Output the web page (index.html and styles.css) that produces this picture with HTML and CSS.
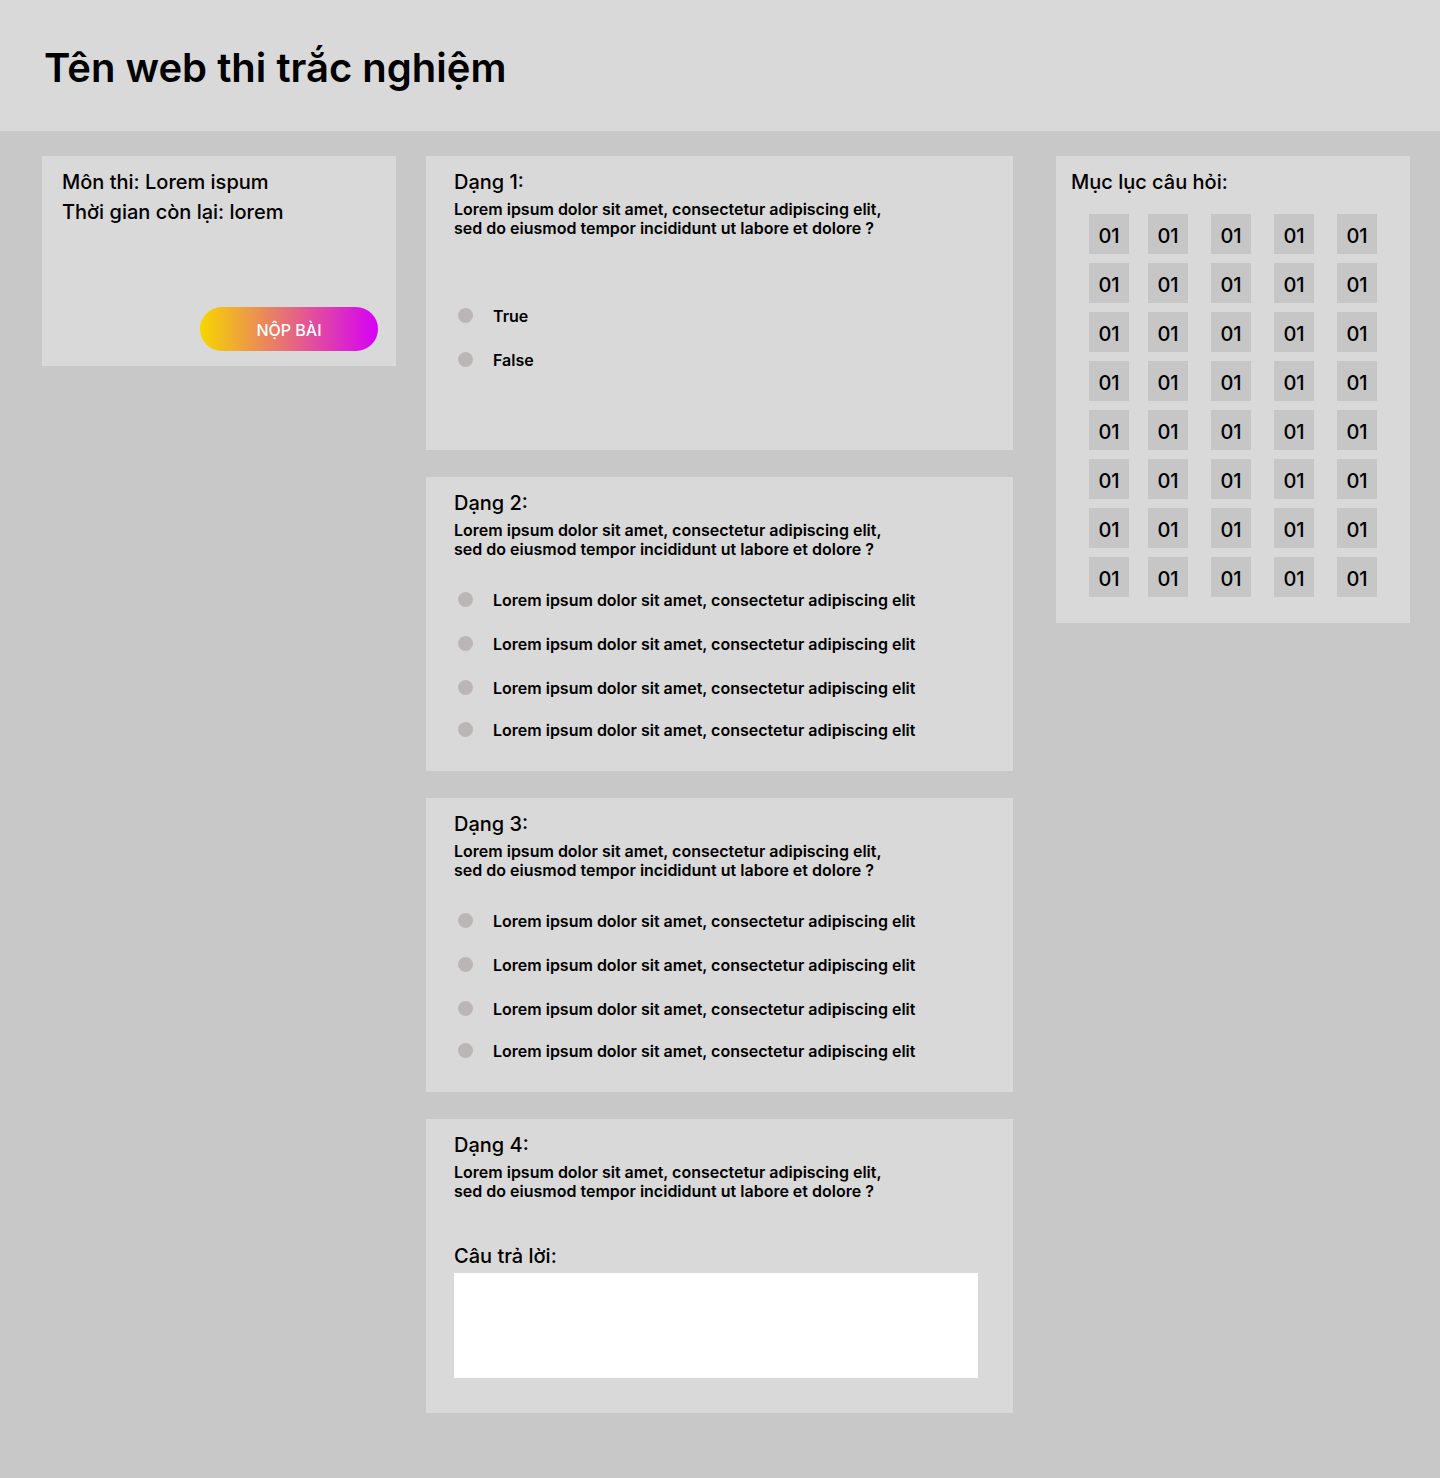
FILE: index.html
```html
<!DOCTYPE html>
<html lang="vi">
<head>
<meta charset="utf-8">
<title>Tên web thi trắc nghiệm</title>
<link rel="stylesheet" href="styles.css">
</head>
<body>
<header class="site-header">
  <h1 class="site-title">Tên web thi trắc nghiệm</h1>
</header>
<main class="layout">
  <aside class="info-card">
    <p class="info-line">Môn thi: Lorem ispum</p>
    <p class="info-line">Thời gian còn lại: lorem</p>
    <button class="submit-btn" type="button">NỘP BÀI</button>
  </aside>

  <section class="questions">
    <article class="q-card">
      <h2 class="q-title">Dạng 1:</h2>
      <p class="q-text">Lorem ipsum dolor sit amet, consectetur adipiscing elit,<br>sed do eiusmod tempor incididunt ut labore et dolore ?</p>
      <ul class="options options-tf">
        <li class="option"><span class="radio"></span><span class="opt-text">True</span></li>
        <li class="option"><span class="radio"></span><span class="opt-text">False</span></li>
      </ul>
    </article>

    <article class="q-card">
      <h2 class="q-title">Dạng 2:</h2>
      <p class="q-text">Lorem ipsum dolor sit amet, consectetur adipiscing elit,<br>sed do eiusmod tempor incididunt ut labore et dolore ?</p>
      <ul class="options">
        <li class="option"><span class="radio"></span><span class="opt-text">Lorem ipsum dolor sit amet, consectetur adipiscing elit</span></li>
        <li class="option"><span class="radio"></span><span class="opt-text">Lorem ipsum dolor sit amet, consectetur adipiscing elit</span></li>
        <li class="option"><span class="radio"></span><span class="opt-text">Lorem ipsum dolor sit amet, consectetur adipiscing elit</span></li>
        <li class="option"><span class="radio"></span><span class="opt-text">Lorem ipsum dolor sit amet, consectetur adipiscing elit</span></li>
      </ul>
    </article>

    <article class="q-card">
      <h2 class="q-title">Dạng 3:</h2>
      <p class="q-text">Lorem ipsum dolor sit amet, consectetur adipiscing elit,<br>sed do eiusmod tempor incididunt ut labore et dolore ?</p>
      <ul class="options">
        <li class="option"><span class="radio"></span><span class="opt-text">Lorem ipsum dolor sit amet, consectetur adipiscing elit</span></li>
        <li class="option"><span class="radio"></span><span class="opt-text">Lorem ipsum dolor sit amet, consectetur adipiscing elit</span></li>
        <li class="option"><span class="radio"></span><span class="opt-text">Lorem ipsum dolor sit amet, consectetur adipiscing elit</span></li>
        <li class="option"><span class="radio"></span><span class="opt-text">Lorem ipsum dolor sit amet, consectetur adipiscing elit</span></li>
      </ul>
    </article>

    <article class="q-card">
      <h2 class="q-title">Dạng 4:</h2>
      <p class="q-text">Lorem ipsum dolor sit amet, consectetur adipiscing elit,<br>sed do eiusmod tempor incididunt ut labore et dolore ?</p>
      <p class="answer-label">Câu trả lời:</p>
      <div class="answer-box"></div>
    </article>
  </section>

  <aside class="index-card">
    <h2 class="index-title">Mục lục câu hỏi:</h2>
    <div class="index-grid">
      <span class="idx">01</span><span class="idx">01</span><span class="idx">01</span><span class="idx">01</span><span class="idx">01</span>
      <span class="idx">01</span><span class="idx">01</span><span class="idx">01</span><span class="idx">01</span><span class="idx">01</span>
      <span class="idx">01</span><span class="idx">01</span><span class="idx">01</span><span class="idx">01</span><span class="idx">01</span>
      <span class="idx">01</span><span class="idx">01</span><span class="idx">01</span><span class="idx">01</span><span class="idx">01</span>
      <span class="idx">01</span><span class="idx">01</span><span class="idx">01</span><span class="idx">01</span><span class="idx">01</span>
      <span class="idx">01</span><span class="idx">01</span><span class="idx">01</span><span class="idx">01</span><span class="idx">01</span>
      <span class="idx">01</span><span class="idx">01</span><span class="idx">01</span><span class="idx">01</span><span class="idx">01</span>
      <span class="idx">01</span><span class="idx">01</span><span class="idx">01</span><span class="idx">01</span><span class="idx">01</span>
    </div>
  </aside>
</main>
</body>
</html>
```

FILE: styles.css
```css
* {
  box-sizing: border-box;
}

html, body {
  margin: 0;
  padding: 0;
}

body {
  background: #c8c8c8;
  font-family: Inter, "Noto Sans", sans-serif;
  color: #000;
  min-height: 1478px;
}

.site-header {
  background: #d9d9d9;
  height: 131px;
  padding: 43px 0 0 44px;
}

.site-title {
  margin: 0;
  font-size: 40px;
  font-weight: 600;
  line-height: normal;
}

.layout {
  display: flex;
  align-items: flex-start;
  padding: 25px 0 65px 42px;
}

/* left info card */
.info-card {
  width: 354px;
  height: 210px;
  background: #d9d9d9;
  padding: 11px 18px 15px 20px;
  display: flex;
  flex-direction: column;
}

.info-line {
  margin: 0;
  font-size: 20px;
  font-weight: 500;
  line-height: 30px;
}

.submit-btn {
  margin-top: auto;
  align-self: flex-end;
  width: 178px;
  height: 44px;
  border: none;
  border-radius: 22px;
  background: linear-gradient(90deg, #f6d600 0%, #d600f7 100%);
  color: #fff;
  font-family: Inter, "Noto Sans", sans-serif;
  font-size: 16px;
  font-weight: 500;
  padding: 1px 0 0;
  cursor: pointer;
}

/* question column */
.questions {
  width: 587px;
  margin-left: 30px;
  display: flex;
  flex-direction: column;
  gap: 27px;
}

.q-card {
  height: 294px;
  background: #d9d9d9;
  padding: 14px 28px 0 28px;
}

.q-title {
  margin: 0;
  font-size: 20px;
  font-weight: 500;
  line-height: 24px;
}

.q-text {
  margin: 6px 0 0;
  font-size: 16px;
  font-weight: 600;
  line-height: 19px;
}

.options {
  list-style: none;
  margin: 31px 0 0;
  padding: 0;
  display: flex;
  flex-direction: column;
  gap: 24px;
}

.options-tf {
  margin-top: 68px;
}

.option {
  display: flex;
  align-items: flex-start;
  line-height: 20px;
  font-size: 16px;
  font-weight: 600;
}

.option:last-child:nth-child(4) {
  margin-top: -2px;
}

.radio {
  width: 15px;
  height: 15px;
  border-radius: 50%;
  background: #bab6b6;
  margin: 2px 20px 0 4px;
  flex: none;
}

.answer-label {
  margin: 43px 0 0;
  font-size: 20px;
  font-weight: 500;
  line-height: 24px;
}

.answer-box {
  margin-top: 5px;
  width: 524px;
  height: 105px;
  background: #fff;
}

/* right index card */
.index-card {
  width: 354px;
  margin-left: 43px;
  background: #d9d9d9;
  padding: 14px 14px 26px 15px;
}

.index-title {
  margin: 0;
  font-size: 20px;
  font-weight: 500;
  line-height: 24px;
}

.index-grid {
  margin: 20px 0 0 18px;
  display: grid;
  grid-template-columns: 59px 63px 63px 63px 40px;
  grid-auto-rows: 40px;
  row-gap: 9px;
}

.idx {
  width: 40px;
  height: 40px;
  background: #c6c6c6;
  font-size: 20px;
  font-weight: 500;
  line-height: 44px;
  text-align: center;
}
```
